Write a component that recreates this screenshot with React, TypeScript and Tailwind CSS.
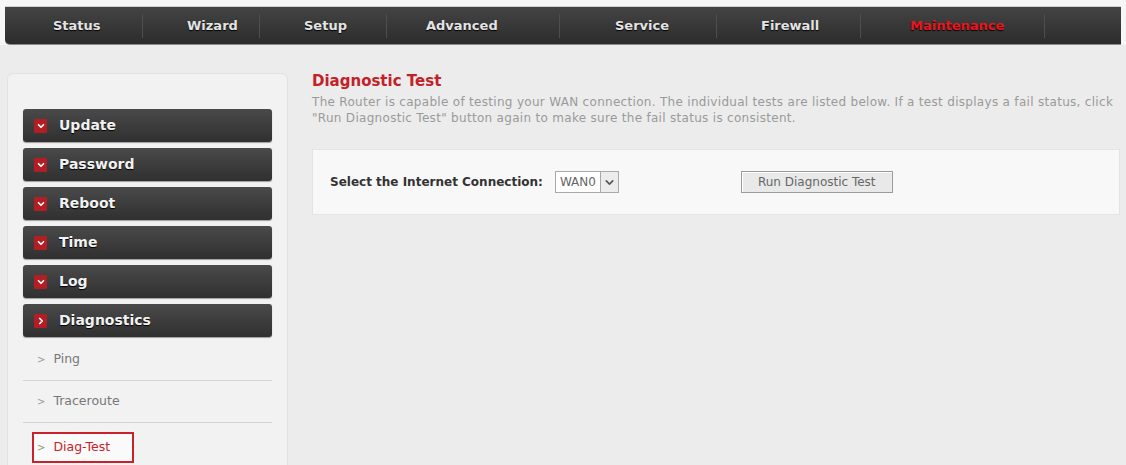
import { ChevronDown, ChevronRight } from 'lucide-react';

// each tab: cell width and left inset of its label
const topNav = [
  { label: 'Status', cell: 'w-[138px] pl-[48px]' },
  { label: 'Wizard', cell: 'w-[117px] pl-[44px]' },
  { label: 'Setup', cell: 'w-[127px] pl-[44px]' },
  { label: 'Advanced', cell: 'w-[173px] pl-[39px]' },
  { label: 'Service', cell: 'w-[157px] pl-[55px]' },
  { label: 'Firewall', cell: 'w-[144px] pl-[44px]' },
  { label: 'Maintenance', cell: 'w-[184px] pl-[49px]', active: true },
];

const groups = ['Update', 'Password', 'Reboot', 'Time', 'Log'];
const diagLinks = ['Ping', 'Traceroute'];

function GroupButton({ label, open }: { label: string; open?: boolean }) {
  return (
    <div className="h-[33px] rounded-[3px] bg-gradient-to-b from-[#4a4a4a] to-[#303030] shadow-[0_1px_1px_rgba(0,0,0,0.35)] flex items-center pl-[11px]">
      <span className="w-[13px] h-[14px] bg-[#b31d24] rounded-[1px] flex items-center justify-center">
        {open ? (
          <ChevronRight size={10} strokeWidth={4} className="text-white" />
        ) : (
          <ChevronDown size={10} strokeWidth={4} className="text-white" />
        )}
      </span>
      <span className="ml-[12px] text-[14px] font-bold text-[#f2f2f2] [text-shadow:0_1px_1px_#000]">{label}</span>
    </div>
  );
}

export default function App() {
  return (
    <div className="w-[1126px] h-[465px] overflow-hidden bg-[#ececec] font-['DejaVu_Sans',Verdana,sans-serif]">
      {/* top menu */}
      <div className="bg-[#f6f6f6] pt-[6px] px-[5px]">
        <div className="h-[39px] flex items-center rounded-bl-[5px] bg-gradient-to-b from-[#444] via-[#383838] to-[#2c2c2c] border-t border-[#d0d0d0] border-b border-b-[#8a8a8a]">
          {topNav.map((item) => (
            <div key={item.label} className={`${item.cell} h-full flex items-center`}>
              <span
                className={`flex-1 text-[13px] font-bold [text-shadow:0_1px_1px_#000] ${
                  item.active ? 'text-[#e8161f]' : 'text-[#e4e4e4]'
                }`}
              >
                {item.label}
              </span>
              <span className="w-px h-[24px] bg-[#252525] border-r border-[#4e4e4e]" />
            </div>
          ))}
        </div>
      </div>

      <div className="flex">
        {/* side menu */}
        <aside className="ml-[7px] mt-[28px] w-[281px] h-[420px] rounded-t-[6px] bg-[#f2f2f2] border border-[#e2e2e2] px-[15px] pt-[35px]">
          <div className="flex flex-col gap-[6px]">
            {groups.map((g) => (
              <GroupButton key={g} label={g} />
            ))}
            <GroupButton label="Diagnostics" open />
          </div>
          <div className="mt-[2px] text-[12.5px] text-[#777]">
            {diagLinks.map((l) => (
              <div key={l} className="h-[42px] flex items-center border-b border-[#d2d2d2] pl-[14px]">
                <span className="text-[10px] text-[#999] mr-[8px]">&gt;</span>
                {l}
              </div>
            ))}
            <div className="mt-[9px] ml-[9px] w-[102px] h-[31px] border-2 border-[#c9222b] bg-[#fafafa] flex items-center pl-[3px]">
              <span className="text-[10px] text-[#8a9a72] mr-[8px]">&gt;</span>
              <span className="text-[#c9222b]">Diag-Test</span>
            </div>
          </div>
        </aside>

        {/* main content */}
        <main className="ml-[24px] flex-1 pt-[27px]">
          <h1 className="text-[15px] font-bold text-[#c4202a] leading-[18px]">Diagnostic Test</h1>
          <p className="mt-[4px] text-[12px] tracking-[0.3px] leading-[16px] text-[#9a9a9a] whitespace-nowrap">
            The Router is capable of testing your WAN connection. The individual tests are listed below. If a test displays a fail status, click
            <br />
            "Run Diagnostic Test" button again to make sure the fail status is consistent.
          </p>
          <div className="mt-[23px] mr-[6px] h-[66px] bg-[#f8f8f8] border border-[#e4e4e4] flex items-center pl-[17px]">
            <span className="text-[12px] font-bold text-[#333]">Select the Internet Connection:</span>
            <div className="ml-[12px] flex h-[22px] border border-[#a9a9a9] bg-white">
              <span className="px-[4px] text-[12px] text-[#666] leading-[20px]">WAN0</span>
              <span className="w-[18px] border-l border-[#a9a9a9] bg-[#ececec] flex items-center justify-center">
                <ChevronDown size={13} strokeWidth={3} className="text-[#555]" />
              </span>
            </div>
            <button className="ml-[122px] h-[22px] px-[16px] border border-[#9b9b9b] bg-[#e9e9e9] text-[12px] text-[#666] shadow-[inset_1px_1px_0_#fff]">
              Run Diagnostic Test
            </button>
          </div>
        </main>
      </div>
    </div>
  );
}
